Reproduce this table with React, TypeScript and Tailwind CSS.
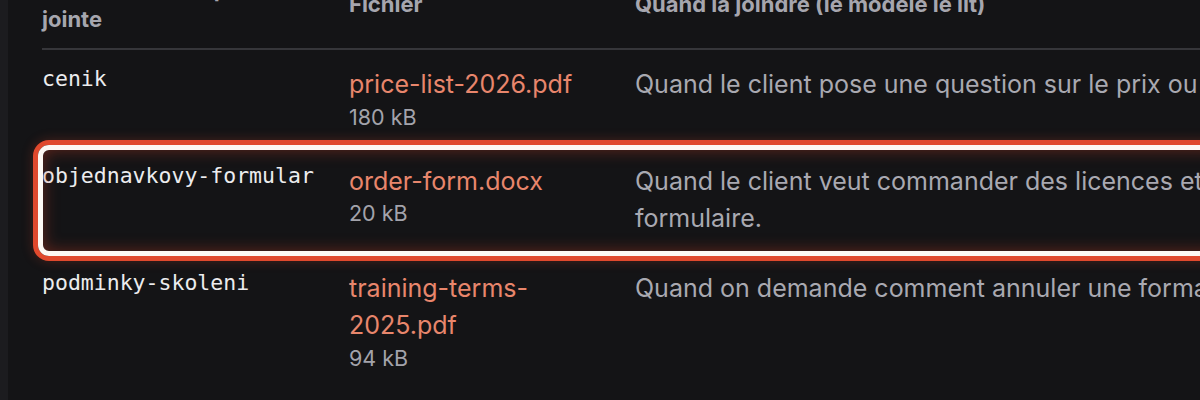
const rows = [
  {
    key: "cenik",
    file: "price-list-2026.pdf",
    size: "180 kB",
    when: "Quand le client pose une question sur le prix ou les remises.",
  },
  {
    key: "objednavkovy-formular",
    file: "order-form.docx",
    size: "20 kB",
    when: "Quand le client veut commander des licences et demande le formulaire.",
    highlight: true,
  },
  {
    key: "podminky-skoleni",
    file: "training-terms-2025.pdf",
    size: "94 kB",
    when: "Quand on demande comment annuler une formation.",
  },
]

const cols = "grid grid-cols-[307px_286px_740px]"

export default function App() {
  return (
    <div className="flex h-[400px] w-[1200px] overflow-hidden bg-[#141416] font-['Inter','Liberation_Sans',sans-serif]">
      <div className="w-2 shrink-0 bg-[#1c1c1f]" />
      <div className="flex-1 pl-[34px]">
        <div className="mt-[-38px] w-[1333px]">
          {/* header */}
          <div className={`${cols} items-center border-b-2 border-[#36363a] pt-3 pb-[14px] text-[22px] leading-[30px] font-bold text-[#a6a6ae]`}>
            <div className="pr-6">Identifiant de la pièce jointe</div>
            <div className="pr-10">Fichier</div>
            <div>Quand la joindre (le modèle le lit)</div>
          </div>

          {rows.map((row) => (
            <div key={row.key} className={`relative ${cols} items-start py-4`}>
              <div className="pr-6 font-['DejaVu_Sans_Mono',monospace] text-[21.5px] leading-[1.2] text-[#ececee]">
                {row.key}
              </div>
              <div className="pr-10">
                <div className="text-[25px] leading-[37.5px] text-[#e8866c]">{row.file}</div>
                <div className="text-[21.5px] leading-[27px] text-[#a3a3ab]">{row.size}</div>
              </div>
              <div className="text-[25px] leading-[37.5px] text-[#a9a9b1]">{row.when}</div>

              {row.highlight && (
                <div className="pointer-events-none absolute -top-[7px] -bottom-[7px] -left-[9px] right-0 rounded-[16px] border-[5px] border-[#e0492d] shadow-[0_0_12px_rgba(224,73,45,0.25)]">
                  <div className="absolute inset-0 rounded-[11px] border-[5px] border-[#fdf8f3] shadow-[inset_0_0_16px_rgba(200,60,35,0.45)]" />
                </div>
              )}
            </div>
          ))}
        </div>
      </div>
    </div>
  )
}
